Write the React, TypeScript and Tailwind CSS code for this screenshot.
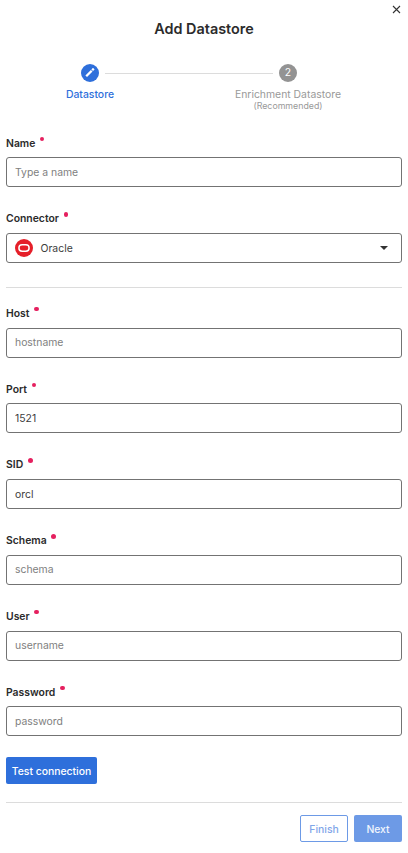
import type { ReactNode } from "react";

type FieldProps = {
  label: string;
  className: string;
  gap?: string;
  dot?: string;
  children: ReactNode;
};

function Field({ label, className, gap = "mb-[7px]", dot = "h-[5px] w-[5px]", children }: FieldProps) {
  return (
    <div className={className}>
      <div className={`flex h-4 items-start gap-[4.6px] ${gap}`}>
        <span className="text-[10.4px] leading-[17px] font-semibold whitespace-nowrap text-[#2b2b2b]">{label}</span>
        <span className={`mt-[2px] rounded-full bg-[#e5205f] ${dot}`} />
      </div>
      {children}
    </div>
  );
}

function TextInput({ placeholder, value, pad = "" }: { placeholder?: string; value?: string; pad?: string }) {
  return (
    <input
      type="text"
      placeholder={placeholder}
      defaultValue={value}
      className={`block h-[30px] w-full rounded-[3px] border border-[#737373] bg-white px-2 text-[10.4px] text-[#3c3c3c] outline-none placeholder:text-[#808080] ${pad}`}
    />
  );
}

export default function App() {
  return (
    <div className="relative h-[853px] w-[408px] overflow-hidden bg-white px-[6px] font-['Inter','Liberation_Sans',sans-serif] text-[#2b2b2b]">
      <button className="absolute top-[5px] right-[7px] h-[9px] w-[9px]" aria-label="Close">
        <svg viewBox="0 0 9 9" className="block h-[9px] w-[9px]" fill="none" stroke="#333" strokeWidth="1.1">
          <path d="M1 1l7 7M8 1l-7 7" />
        </svg>
      </button>

      <h1 className="pt-[19px] text-center text-[14.4px] leading-5 font-semibold">Add Datastore</h1>

      <div className="mt-[25px] flex h-[71px] items-start">
        <div className="flex w-[168px] flex-none flex-col items-center">
          <div className="flex w-full items-center">
            <div className="flex-1" />
            <div className="flex h-[18px] w-[18px] items-center justify-center rounded-full bg-[#2e6fdb]">
              <svg viewBox="0 0 10 10" className="h-[10px] w-[10px]" fill="none" stroke="#fff" strokeWidth="2.3">
                <path d="M1.2 8.2L6.7 2.7M7.2 2.2L8.8 .6" />
              </svg>
            </div>
            <div className="flex flex-1 justify-end">
              <div className="h-px w-[69px] bg-[#dcdcdc]" />
            </div>
          </div>
          <span className="mt-[5px] text-[10.4px] leading-4 font-medium text-[#2e6fdb]">Datastore</span>
        </div>
        <div className="flex w-[228px] flex-none flex-col items-center">
          <div className="flex w-full items-center">
            <div className="flex flex-1 justify-start">
              <div className="h-px w-[99px] bg-[#dcdcdc]" />
            </div>
            <div className="flex h-[18px] w-[18px] items-center justify-center rounded-full bg-[#939393] text-[10.4px] leading-none text-white">2</div>
            <div className="flex-1" />
          </div>
          <span className="mt-[5px] text-[10.4px] leading-4 text-[#999]">Enrichment Datastore</span>
          <span className="-mt-[2px] text-[8.8px] leading-[10px] text-[#999]">(Recommended)</span>
        </div>
      </div>

      <Field label="Name" className="" gap="mb-[6px]" dot="h-[4px] w-[4px]"><TextInput placeholder="Type a name" /></Field>
      <Field label="Connector" className="mt-[23px]" dot="h-[5px] w-[4px]">
        <button className="flex h-[30px] w-full items-center rounded-[3px] border border-[#737373] px-2 text-left">
          <svg viewBox="0 0 18 18" className="h-[18px] w-[18px]">
            <circle cx="9" cy="9" r="9" fill="#e51f29" />
            <rect x="3.9" y="5.8" width="10.2" height="6.4" rx="3.2" fill="none" stroke="#fff" strokeWidth="1.5" />
          </svg>
          <span className="ml-[7.5px] flex-1 pt-[2px] text-[10.4px] leading-4 text-[#3c3c3c]">Oracle</span>
          <svg viewBox="0 0 8 4" className="mr-[5px] h-1 w-2"><path d="M0 0h8l-4 4z" fill="#333" /></svg>
        </button>
      </Field>

      <div className="mt-6 h-px bg-[#dcdcdc]" />

      <Field label="Host" className="mt-[17px]" dot="h-[4px] w-[5px]"><TextInput placeholder="hostname" pad="pb-[2px]" /></Field>
      <Field label="Port" className="mt-[23px]" gap="mb-[6px]" dot="h-[4px] w-[4px]"><TextInput value="1521" /></Field>
      <Field label="SID" className="mt-[23px]"><TextInput value="orcl" /></Field>
      <Field label="Schema" className="mt-[23px]"><TextInput placeholder="schema" pad="pb-[2px]" /></Field>
      <Field label="User" className="mt-[23px]" dot="h-[4px] w-[5px]"><TextInput placeholder="username" pad="pb-[2px]" /></Field>
      <Field label="Password" className="mt-[23px]" gap="mb-[6px]" dot="h-[4px] w-[5px]"><TextInput placeholder="password" /></Field>

      <button className="mt-[21px] flex h-[27px] w-[91px] items-center justify-center rounded-[2px] bg-[#2e6fdb] pt-[2px] text-[10.4px] font-medium whitespace-nowrap text-white">Test connection</button>

      <div className="mt-[18px] h-px bg-[#dcdcdc]" />
      <div className="mt-3 flex justify-end gap-[6px] text-[10.4px] font-medium">
        <button className="h-[27px] w-12 rounded-[2px] border border-[#6d9ae6] pt-[2px] text-[#7fa6e9]">Finish</button>
        <button className="h-[27px] w-12 rounded-[2px] bg-[#6d9ae6] pt-[2px] text-[#f0f5fd]">Next</button>
      </div>
    </div>
  );
}
